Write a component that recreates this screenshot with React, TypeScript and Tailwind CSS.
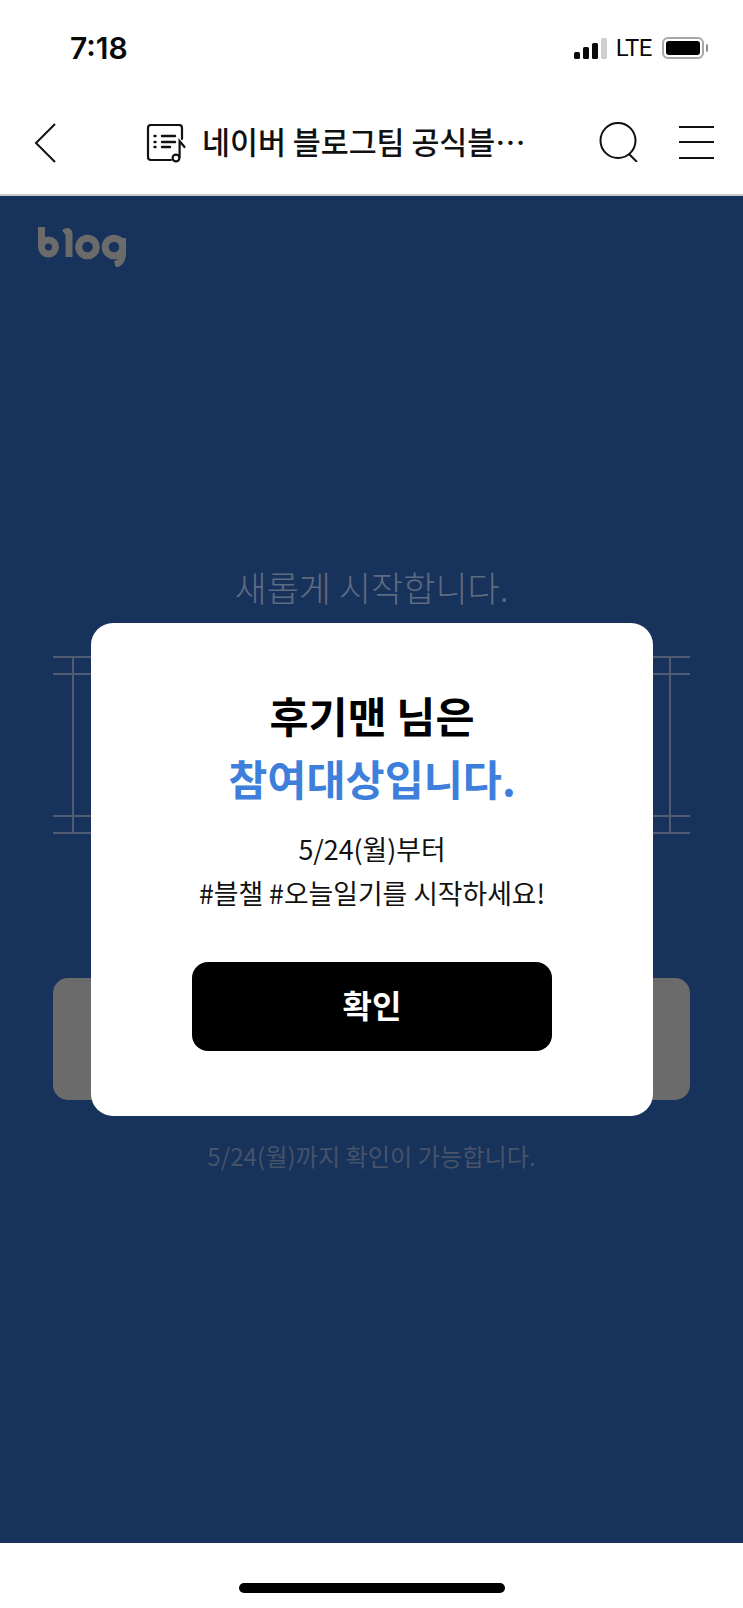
import React from 'react';

const BlogLogo = () => (
  <svg width="90" height="40" viewBox="0 0 90 40" fill="none" stroke="#6b6b6b" strokeWidth="7">
    {/* b */}
    <path d="M3.5 0V20" />
    <circle cx="10.5" cy="20" r="7" />
    {/* l */}
    <path d="M26 6C29.5 3.5 31 4 31 8V30" />
    {/* o */}
    <circle cx="49.5" cy="20" r="8.8" />
    {/* g */}
    <circle cx="76" cy="20" r="8.8" />
    <path d="M84.5 11V27C84.5 33 82 36 77 37.5" />
  </svg>
);

const DocMusicIcon = () => (
  <svg width="41" height="40" viewBox="0 0 41 40" fill="none" stroke="#111" strokeWidth="2.2" strokeLinecap="round" className="mt-[6px]">
    <path d="M36 15V4C36 2 35 1 33 1H5C3 1 2 2 2 4V33C2 35 3 36 5 36H25" />
    <path d="M8.5 12H9.5M16 12H29M8.5 18H9.5M16 18H29M8.5 23H9.5M16 23H24" strokeWidth="2.4" />
    <circle cx="30" cy="34" r="3.4" />
    <path d="M33.6 33V17L38.5 23" />
  </svg>
);

const Signal = () => (
  <div className="flex items-end gap-[3px] h-[21px]">
    <div className="w-[6px] h-[7px] rounded-[1.5px] bg-[#0a0a0a]" />
    <div className="w-[6px] h-[12px] rounded-[1.5px] bg-[#0a0a0a]" />
    <div className="w-[6px] h-[16px] rounded-[1.5px] bg-[#0a0a0a]" />
    <div className="w-[6px] h-[21px] rounded-[1.5px] bg-[#cfcfcf]" />
  </div>
);

const Battery = () => (
  <div className="flex items-center gap-[2px]">
    <div className="w-[42px] h-[22px] rounded-[6px] border-2 border-[#a8a8a8] p-[2px]">
      <div className="w-[34px] h-[14px] rounded-[3px] bg-black" />
    </div>
    <div className="w-[2px] h-[8px] rounded-r-full bg-[#8a8a8a]" />
  </div>
);

export default function App() {
  return (
    <div className="relative w-[743px] h-[1608px] bg-white flex flex-col overflow-hidden font-['Noto_Sans_CJK_KR',sans-serif]">
      {/* Status bar */}
      <div className="h-[96px] pl-[70px] pr-[35px] flex items-center justify-between shrink-0">
        <span className="text-[30px] leading-none font-semibold text-[#0a0a0a] font-['Inter',sans-serif]">7:18</span>
        <div className="flex items-center">
          <Signal />
          <span className="ml-[9px] mr-[10px] text-[24px] leading-none text-[#0a0a0a] font-['Roboto',sans-serif] tracking-[-0.5px]">LTE</span>
          <Battery />
        </div>
      </div>

      {/* Nav bar */}
      <div className="h-[100px] pb-[8px] pl-[34px] pr-[29px] flex items-center justify-between shrink-0 border-b-2 border-[#c9c9c9]">
        <svg width="22" height="40" viewBox="0 0 22 40" fill="none" stroke="#111" strokeWidth="2" className="mt-[4px]">
          <path d="M21 1L2 20L21 39" />
        </svg>
        <div className="flex items-center ml-[90px] mr-[30px] flex-1">
          <DocMusicIcon />
          <span className="ml-[15px] text-[30.4px] leading-none font-medium text-[#111] whitespace-nowrap">네이버 블로그팀 공식블…</span>
        </div>
        <svg width="40" height="40" viewBox="0 0 40 40" fill="none" stroke="#111" strokeWidth="2" className="mr-[40px] mt-[2px]">
          <circle cx="19" cy="18.5" r="17.5" />
          <path d="M30 32L38 40" />
        </svg>
        <div className="w-[35px] h-[33px] mt-[2px] flex flex-col justify-between">
          <div className="h-[2px] bg-[#111]" />
          <div className="h-[2px] bg-[#111]" />
          <div className="h-[2px] bg-[#111]" />
        </div>
      </div>

      {/* Dimmed page */}
      <div className="h-[1347px] bg-[#17325b] shrink-0 flex flex-col">
        <div className="mt-[31px] ml-[38px] h-[40px]">
          <BlogLogo />
        </div>
        <p className="mt-[295px] text-center text-[35px] leading-[50px] text-[#5f6b80] font-light">새롭게 시작합니다.</p>
        <div className="mt-[44px] mx-[53px] h-[178px] flex flex-col border-y-2 border-[#4f5c74]">
          <div className="h-[17px] border-b-2 border-[#4f5c74]">
            <div className="h-full mx-[19px] border-x-2 border-[#4f5c74]" />
          </div>
          <div className="flex-1 mx-[19px] border-x-2 border-[#4f5c74]" />
          <div className="h-[17px] border-t-2 border-[#4f5c74]">
            <div className="h-full mx-[19px] border-x-2 border-[#4f5c74]" />
          </div>
        </div>
        <div className="mt-[144px] mx-[53px] h-[122px] rounded-[15px] bg-[#6b6b6b]" />
        <p className="mt-[36px] text-center text-[24.2px] leading-[40px] text-[#465369]">5/24(월)까지 확인이 가능합니다.</p>
      </div>

      {/* Home indicator */}
      <div className="flex-1 flex justify-center pt-[40px]">
        <div className="w-[266px] h-[10px] rounded-full bg-black" />
      </div>

      {/* Modal */}
      <div className="absolute left-[91px] top-[623px] w-[562px] h-[493px] rounded-[22px] bg-white flex flex-col items-center pt-[60px]">
        <h1 className="text-[42.5px] leading-[63px] font-bold text-black text-center">
          후기맨 님은
          <br />
          <span className="text-[#3f7fdc]">참여대상입니다.</span>
        </h1>
        <p className="mt-[18px] text-[26.8px] leading-[44px] text-[#111] text-center">
          5/24(월)부터
          <br />
          #블챌 #오늘일기를 시작하세요!
        </p>
        <button className="mt-[47px] w-[360px] h-[89px] pb-[6px] rounded-[16px] bg-black text-white text-[32px] font-bold leading-none">
          확인
        </button>
      </div>
    </div>
  );
}
